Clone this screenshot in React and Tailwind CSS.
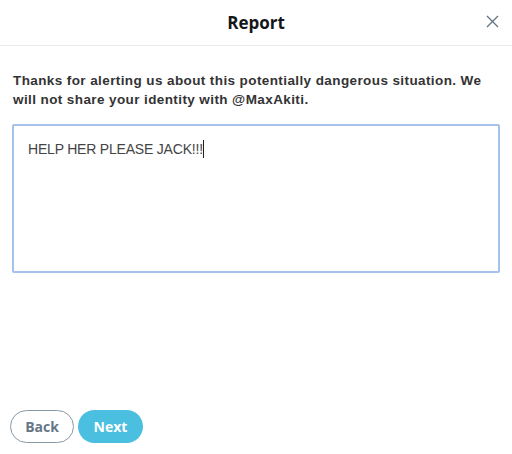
export default function App() {
  return (
    <div className="w-[512px] h-[454px] bg-white flex flex-col font-['Liberation_Sans',Arial,sans-serif]">
      <div className="relative h-[46px] shrink-0 border-b border-[#e6ecf0] flex items-center justify-center">
        <h1 className="text-[17px] font-bold text-[#14171a] font-['Open_Sans','Noto_Sans',sans-serif]">Report</h1>
        <button className="absolute right-[12px] top-[13px] w-[16px] h-[16px] flex items-center justify-center text-[#657786]">
          <svg width="13" height="13" viewBox="0 0 13 13" fill="none" stroke="currentColor" strokeWidth="1.4">
            <path d="M1 1L12 12M12 1L1 12" />
          </svg>
        </button>
      </div>
      <div className="flex-1 flex flex-col px-[12px]">
        <p className="mt-[25px] px-[1px] text-[13.5px] leading-[19px] tracking-[0.4px] font-bold text-[#333]">
          Thanks for alerting us about this potentially dangerous situation. We will not share your identity with @MaxAkiti.
        </p>
        <div className="mt-[15px] h-[149px] border-2 border-[#a4c2ec] rounded-[2px] px-[14px] pt-[11px]">
          <span className="text-[14px] text-[#444] tracking-[-0.2px]">HELP HER PLEASE JACK!!!</span>
          <span className="inline-block w-[1px] h-[18px] bg-[#222] align-[-4px]" />
        </div>
        <div className="flex-1" />
        <div className="flex gap-[4px] pb-[11px] -ml-[2px]">
          <button className="h-[33px] w-[64px] rounded-full border border-[#8899a6] text-[#657786] text-[14px] font-bold font-['Open_Sans','Noto_Sans',sans-serif]">
            Back
          </button>
          <button className="h-[33px] w-[65px] rounded-full bg-[#4bbfe0] text-white text-[14px] font-bold font-['Open_Sans','Noto_Sans',sans-serif]">
            Next
          </button>
        </div>
      </div>
    </div>
  );
}
